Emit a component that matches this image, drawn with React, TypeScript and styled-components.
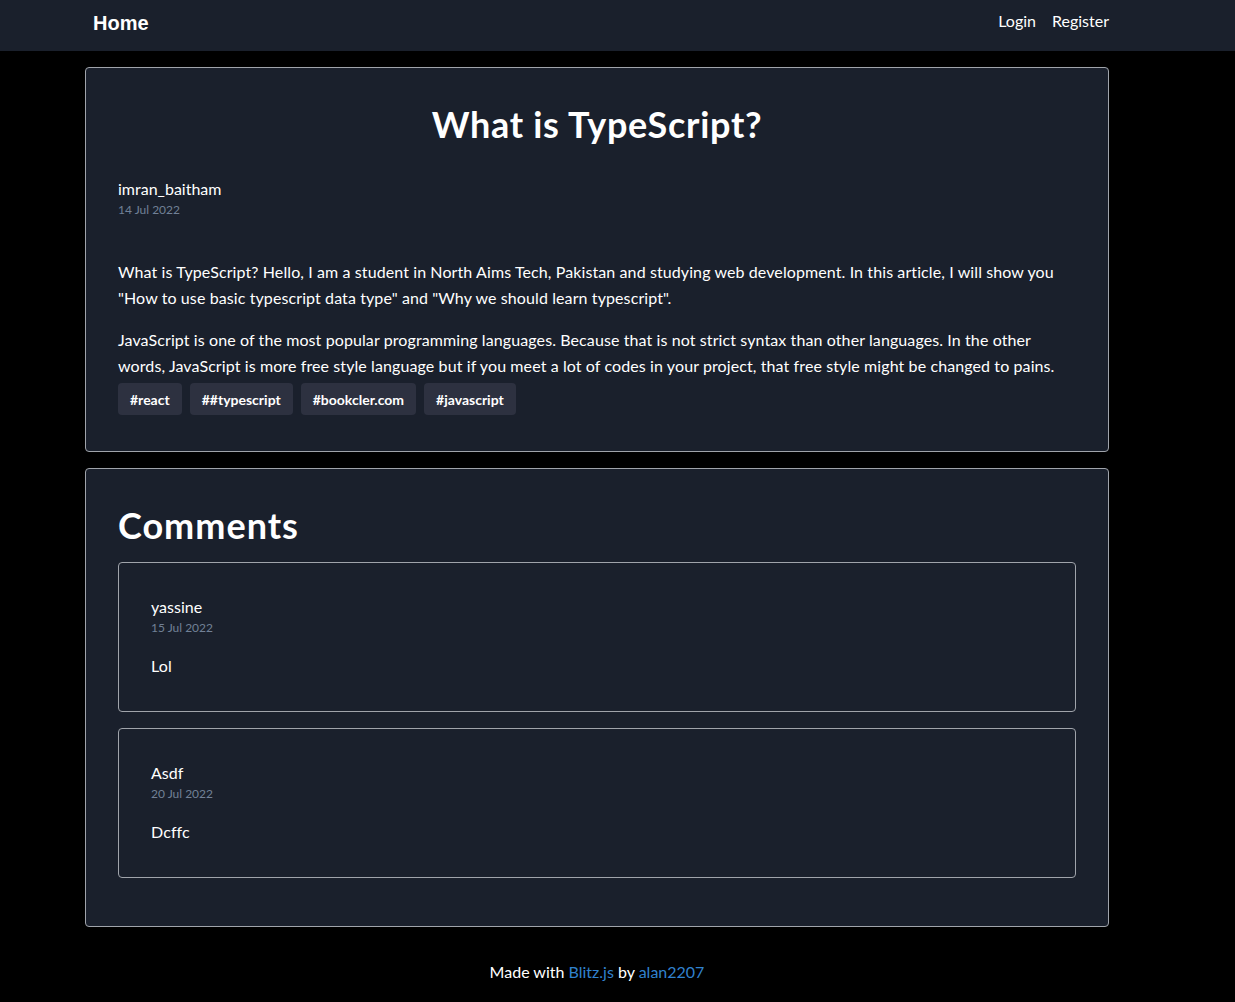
import React from "react";
import styled, { createGlobalStyle } from "styled-components";

const Global = createGlobalStyle`
  html, body { margin: 0; padding: 0; background: #000; }
  body {
    font-family: Lato, "Segoe UI", "Noto Sans", sans-serif;
    color: #fff;
    font-size: 16px;
    line-height: 1.5;
  }
  * { box-sizing: border-box; }
`;

const Nav = styled.nav`
  height: 51px;
  background: #1a202c;
`;

const NavInner = styled.div`
  width: 1024px;
  margin-left: 85px;
  height: 100%;
  display: flex;
  justify-content: space-between;
  align-items: flex-start;
`;

const Brand = styled.a`
  font-family: "Liberation Sans", Arial, sans-serif;
  font-weight: 700;
  font-size: 20px;
  color: #fff;
  padding: 8px 8px;
  text-decoration: none;
`;

const NavLinks = styled.div`
  display: flex;
  gap: 16px;
  padding-top: 9px;
`;

const NavLink = styled.a`
  color: #fff;
  text-decoration: none;
  font-size: 16px;
`;

const Main = styled.main`
  width: 1024px;
  margin-left: 85px;
  padding-top: 16px;
  display: flex;
  flex-direction: column;
  gap: 16px;
`;

const Card = styled.section`
  background: #1a202c;
  border: 1px solid #a0a4ab;
  border-radius: 4px;
  padding: 32px;
`;

const Title = styled.h1`
  margin: 0 0 29px;
  text-align: center;
  font-size: 36px;
  font-weight: 700;
  line-height: 48px;
  letter-spacing: 0.7px;
`;

const Heading = styled.h2`
  margin: 0 0 13px;
  font-size: 36px;
  font-weight: 700;
  line-height: 48px;
  letter-spacing: 1px;
`;

const Author = styled.div`
  font-size: 16px;
  line-height: 24px;
`;

const DateText = styled.div`
  font-size: 12px;
  line-height: 18px;
  color: #718096;
`;

const Body = styled.div<{ $gap: number }>`
  margin-top: ${(p) => p.$gap}px;
`;

const Para = styled.p`
  margin: 0 0 16px;
  line-height: 26px;
  letter-spacing: 0.1px;
  &:last-child { margin-bottom: 0; }
`;

const Tags = styled.div`
  display: flex;
  gap: 8px;
  margin-top: 4px;
  margin-bottom: 4px;
`;

const Tag = styled.span`
  background: #2d3140;
  border-radius: 4px;
  padding: 0 12px;
  height: 32px;
  display: inline-flex;
  align-items: center;
  font-size: 14px;
  font-weight: 700;
`;

const CommentList = styled.div`
  display: flex;
  flex-direction: column;
  gap: 16px;
  margin-bottom: 16px;
`;

const Footer = styled.footer`
  width: 1024px;
  margin-left: 85px;
  text-align: center;
  padding: 33px 0 20px;
  font-size: 16px;
`;

const Link = styled.a`
  color: #3182ce;
  text-decoration: none;
`;

const comments = [
  { user: "yassine", date: "15 Jul 2022", text: "Lol" },
  { user: "Asdf", date: "20 Jul 2022", text: "Dcffc" },
];

export default function App() {
  return (
    <>
      <Global />
      <Nav>
        <NavInner>
          <Brand href="#">Home</Brand>
          <NavLinks>
            <NavLink href="#">Login</NavLink>
            <NavLink href="#">Register</NavLink>
          </NavLinks>
        </NavInner>
      </Nav>
      <Main>
        <Card>
          <Title>What is TypeScript?</Title>
          <Author>imran_baitham</Author>
          <DateText>14 Jul 2022</DateText>
          <Body $gap={40}>
            <Para>
              What is TypeScript? Hello, I am a student in North Aims Tech, Pakistan and studying web
              development. In this article, I will show you "How to use basic typescript data type" and
              "Why we should learn typescript".
            </Para>
            <Para>
              JavaScript is one of the most popular programming languages. Because that is not strict
              syntax than other languages. In the other words, JavaScript is more free style language but
              if you meet a lot of codes in your project, that free style might be changed to pains.
            </Para>
          </Body>
          <Tags>
            <Tag>#react</Tag>
            <Tag>##typescript</Tag>
            <Tag>#bookcler.com</Tag>
            <Tag>#javascript</Tag>
          </Tags>
        </Card>
        <Card>
          <Heading>Comments</Heading>
          <CommentList>
            {comments.map((c) => (
              <Card key={c.user}>
                <Author>{c.user}</Author>
                <DateText>{c.date}</DateText>
                <Body $gap={16}>
                  <Para>{c.text}</Para>
                </Body>
              </Card>
            ))}
          </CommentList>
        </Card>
      </Main>
      <Footer>
        Made with <Link href="#">Blitz.js</Link> by <Link href="#">alan2207</Link>
      </Footer>
    </>
  );
}
